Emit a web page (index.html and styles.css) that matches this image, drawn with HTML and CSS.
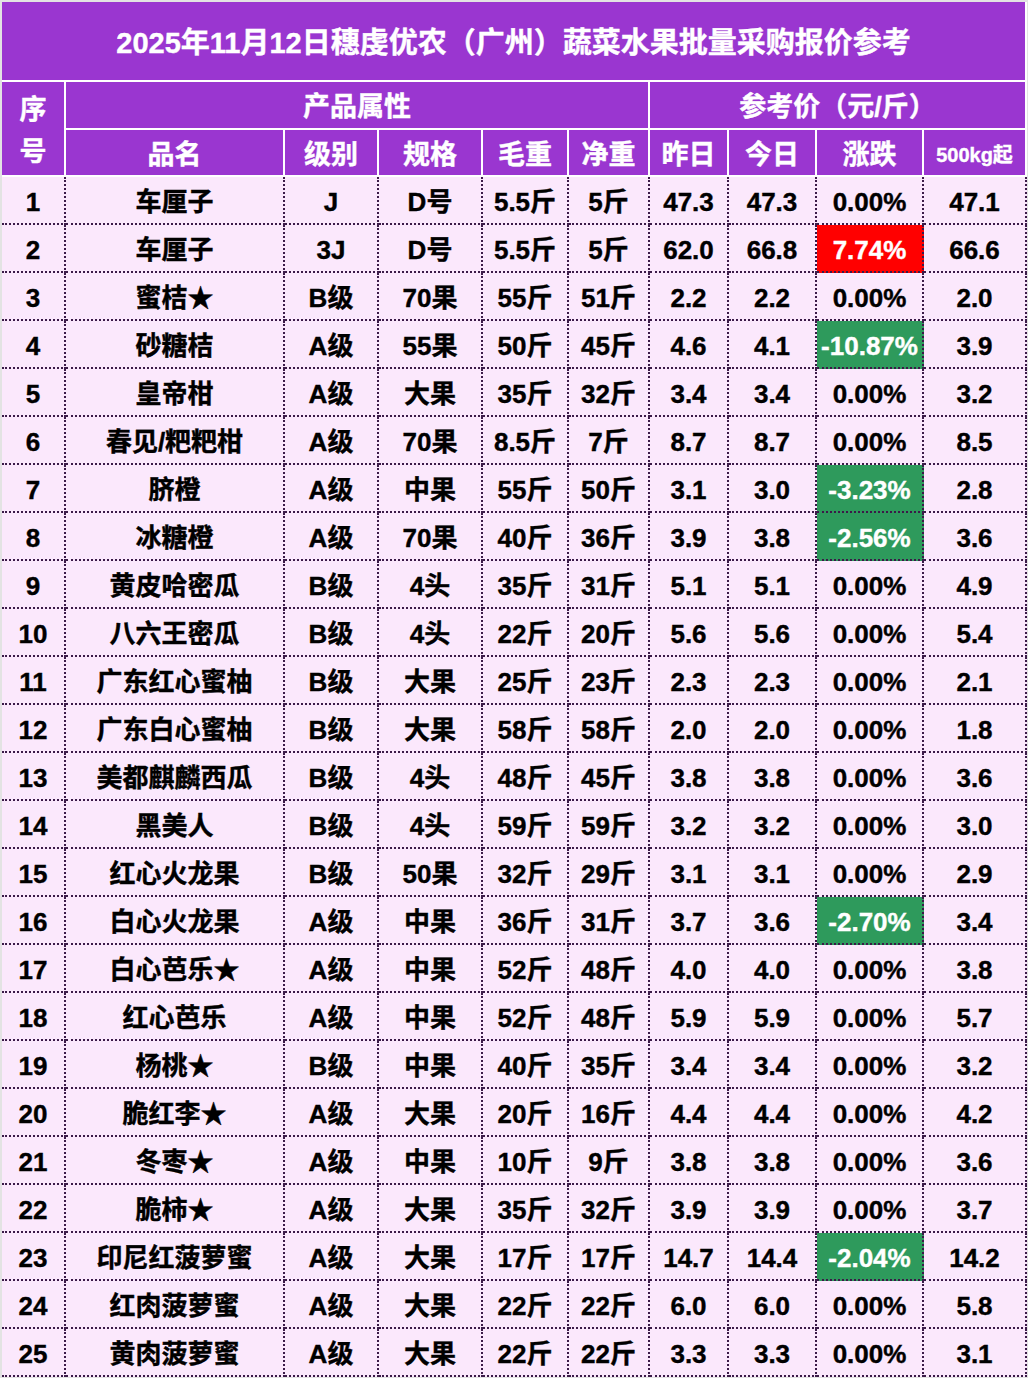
FILE: index.html
```html
<!DOCTYPE html>
<html lang="zh-CN">
<head>
<meta charset="utf-8">
<title>蔬菜水果批量采购报价参考</title>
<link rel="stylesheet" href="styles.css">
</head>
<body>
<table class="sheet">
  <colgroup>
    <col class="c-no"><col class="c-name"><col class="c-grade"><col class="c-spec"><col class="c-gross"><col class="c-net"><col class="c-yday"><col class="c-today"><col class="c-chg"><col class="c-bulk">
  </colgroup>
  <thead>
    <tr class="r-title"><th colspan="10" class="title">2025年11月12日穗虔优农（广州）蔬菜水果批量采购报价参考</th></tr>
    <tr class="r-h1">
      <th rowspan="2" class="no-h">序<br>号</th>
      <th colspan="5">产品属性</th>
      <th colspan="4">参考价（元/斤）</th>
    </tr>
    <tr class="r-h2">
      <th>品名</th><th>级别</th><th>规格</th><th>毛重</th><th>净重</th><th>昨日</th><th>今日</th><th>涨跌</th><th class="small">500kg起</th>
    </tr>
  </thead>
  <tbody>
    <tr><td>1</td><td>车厘子</td><td>J</td><td>D号</td><td>5.5斤</td><td>5斤</td><td>47.3</td><td>47.3</td><td>0.00%</td><td>47.1</td></tr>
    <tr><td>2</td><td>车厘子</td><td>3J</td><td>D号</td><td>5.5斤</td><td>5斤</td><td>62.0</td><td>66.8</td><td class="up">7.74%</td><td>66.6</td></tr>
    <tr><td>3</td><td>蜜桔★</td><td>B级</td><td>70果</td><td>55斤</td><td>51斤</td><td>2.2</td><td>2.2</td><td>0.00%</td><td>2.0</td></tr>
    <tr><td>4</td><td>砂糖桔</td><td>A级</td><td>55果</td><td>50斤</td><td>45斤</td><td>4.6</td><td>4.1</td><td class="down">-10.87%</td><td>3.9</td></tr>
    <tr><td>5</td><td>皇帝柑</td><td>A级</td><td>大果</td><td>35斤</td><td>32斤</td><td>3.4</td><td>3.4</td><td>0.00%</td><td>3.2</td></tr>
    <tr><td>6</td><td>春见/粑粑柑</td><td>A级</td><td>70果</td><td>8.5斤</td><td>7斤</td><td>8.7</td><td>8.7</td><td>0.00%</td><td>8.5</td></tr>
    <tr><td>7</td><td>脐橙</td><td>A级</td><td>中果</td><td>55斤</td><td>50斤</td><td>3.1</td><td>3.0</td><td class="down">-3.23%</td><td>2.8</td></tr>
    <tr><td>8</td><td>冰糖橙</td><td>A级</td><td>70果</td><td>40斤</td><td>36斤</td><td>3.9</td><td>3.8</td><td class="down">-2.56%</td><td>3.6</td></tr>
    <tr><td>9</td><td>黄皮哈密瓜</td><td>B级</td><td>4头</td><td>35斤</td><td>31斤</td><td>5.1</td><td>5.1</td><td>0.00%</td><td>4.9</td></tr>
    <tr><td>10</td><td>八六王密瓜</td><td>B级</td><td>4头</td><td>22斤</td><td>20斤</td><td>5.6</td><td>5.6</td><td>0.00%</td><td>5.4</td></tr>
    <tr><td>11</td><td>广东红心蜜柚</td><td>B级</td><td>大果</td><td>25斤</td><td>23斤</td><td>2.3</td><td>2.3</td><td>0.00%</td><td>2.1</td></tr>
    <tr><td>12</td><td>广东白心蜜柚</td><td>B级</td><td>大果</td><td>58斤</td><td>58斤</td><td>2.0</td><td>2.0</td><td>0.00%</td><td>1.8</td></tr>
    <tr><td>13</td><td>美都麒麟西瓜</td><td>B级</td><td>4头</td><td>48斤</td><td>45斤</td><td>3.8</td><td>3.8</td><td>0.00%</td><td>3.6</td></tr>
    <tr><td>14</td><td>黑美人</td><td>B级</td><td>4头</td><td>59斤</td><td>59斤</td><td>3.2</td><td>3.2</td><td>0.00%</td><td>3.0</td></tr>
    <tr><td>15</td><td>红心火龙果</td><td>B级</td><td>50果</td><td>32斤</td><td>29斤</td><td>3.1</td><td>3.1</td><td>0.00%</td><td>2.9</td></tr>
    <tr><td>16</td><td>白心火龙果</td><td>A级</td><td>中果</td><td>36斤</td><td>31斤</td><td>3.7</td><td>3.6</td><td class="down">-2.70%</td><td>3.4</td></tr>
    <tr><td>17</td><td>白心芭乐★</td><td>A级</td><td>中果</td><td>52斤</td><td>48斤</td><td>4.0</td><td>4.0</td><td>0.00%</td><td>3.8</td></tr>
    <tr><td>18</td><td>红心芭乐</td><td>A级</td><td>中果</td><td>52斤</td><td>48斤</td><td>5.9</td><td>5.9</td><td>0.00%</td><td>5.7</td></tr>
    <tr><td>19</td><td>杨桃★</td><td>B级</td><td>中果</td><td>40斤</td><td>35斤</td><td>3.4</td><td>3.4</td><td>0.00%</td><td>3.2</td></tr>
    <tr><td>20</td><td>脆红李★</td><td>A级</td><td>大果</td><td>20斤</td><td>16斤</td><td>4.4</td><td>4.4</td><td>0.00%</td><td>4.2</td></tr>
    <tr><td>21</td><td>冬枣★</td><td>A级</td><td>中果</td><td>10斤</td><td>9斤</td><td>3.8</td><td>3.8</td><td>0.00%</td><td>3.6</td></tr>
    <tr><td>22</td><td>脆柿★</td><td>A级</td><td>大果</td><td>35斤</td><td>32斤</td><td>3.9</td><td>3.9</td><td>0.00%</td><td>3.7</td></tr>
    <tr><td>23</td><td>印尼红菠萝蜜</td><td>A级</td><td>大果</td><td>17斤</td><td>17斤</td><td>14.7</td><td>14.4</td><td class="down">-2.04%</td><td>14.2</td></tr>
    <tr><td>24</td><td>红肉菠萝蜜</td><td>A级</td><td>大果</td><td>22斤</td><td>22斤</td><td>6.0</td><td>6.0</td><td>0.00%</td><td>5.8</td></tr>
    <tr><td>25</td><td>黄肉菠萝蜜</td><td>A级</td><td>大果</td><td>22斤</td><td>22斤</td><td>3.3</td><td>3.3</td><td>0.00%</td><td>3.1</td></tr>
  </tbody>
</table>
</body>
</html>
```

FILE: styles.css
```css
html, body {
  margin: 0;
  background: #e3e3e3;
}
body {
  padding: 2px 0 0 2px;
  font-family: "Liberation Sans", "Noto Sans CJK SC", sans-serif;
  font-weight: 700;
}
.sheet {
  border-collapse: separate;
  border-spacing: 0;
  table-layout: fixed;
  width: 1025px;
}
.c-no { width: 64px; }
.c-name { width: 219px; }
.c-grade { width: 94px; }
.c-spec { width: 104px; }
.c-gross { width: 86px; }
.c-net { width: 81px; }
.c-yday { width: 79px; }
.c-today { width: 88px; }
.c-chg { width: 107px; }
.c-bulk { width: 103px; }

.sheet th {
  background: #9a36d0;
  color: #ffffff;
  border-right: 2px solid #ffffff;
  border-bottom: 2px solid #ffffff;
  padding: 5px 0 0 0;
  text-align: center;
  vertical-align: middle;
  font-size: 27px;
  font-weight: 700;
  line-height: 1.2;
  white-space: nowrap;
  -webkit-text-stroke: 0.4px #ffffff;
}
.r-title { height: 80px; }
.r-h1 { height: 48px; }
.r-h2 { height: 47px; }
.sheet th.title {
  font-size: 29px;
  padding-top: 4px;
}
.sheet th.no-h {
  line-height: 42px;
  padding-top: 5px;
}
.sheet th.small {
  font-size: 20px;
}
.sheet tbody tr { height: 48px; }
.sheet td {
  background: #fbe8fc;
  color: #000000;
  border-right: 2px dotted #3b1a48;
  border-bottom: 2px dotted #3b1a48;
  padding: 5px 0 0 0;
  text-align: center;
  vertical-align: middle;
  font-size: 26px;
  line-height: 1.2;
  white-space: nowrap;
  -webkit-text-stroke: 0.4px #000000;
}
.sheet td.up {
  background: #ff0000;
  color: #ffffff;
  -webkit-text-stroke-color: #ffffff;
}
.sheet td.down {
  background: #2e9a5c;
  color: #ffffff;
  -webkit-text-stroke-color: #ffffff;
}
```
